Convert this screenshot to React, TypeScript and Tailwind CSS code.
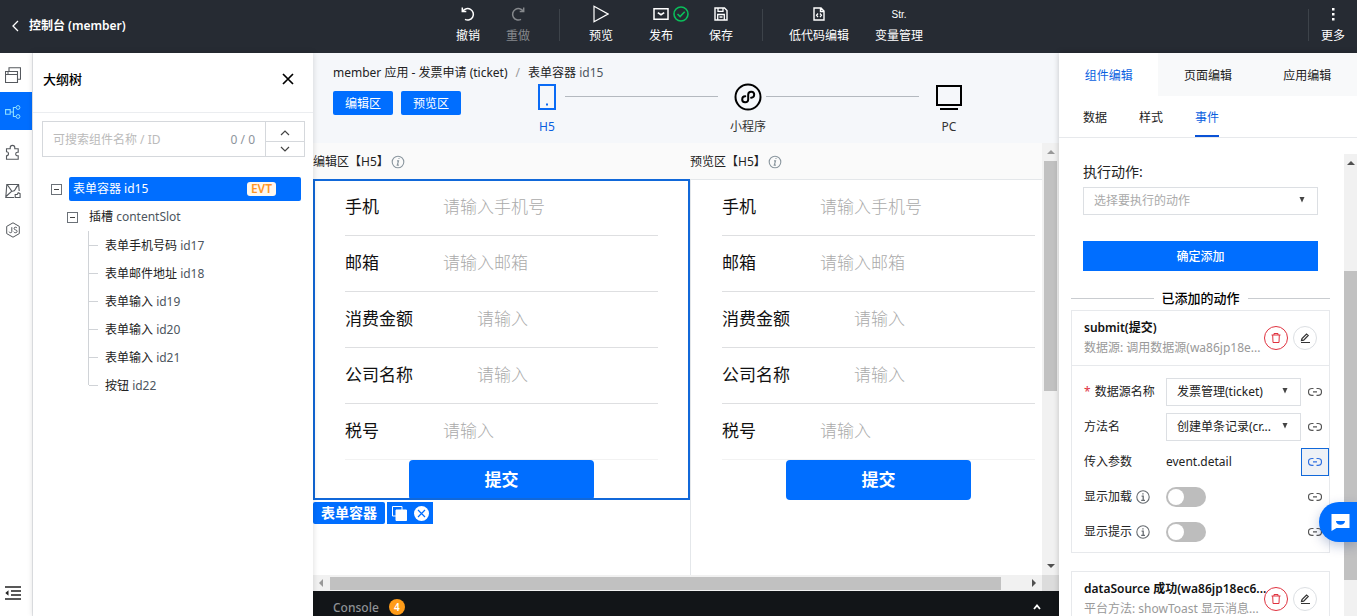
import React, { useState } from "react";

type P = { children?: React.ReactNode; className?: string };

const Svg = ({ children, className = "", box = "0 0 16 16" }: P & { box?: string }) => (
  <svg viewBox={box} className={className} fill="none" stroke="currentColor" strokeWidth="1" aria-hidden="true">
    {children}
  </svg>
);

const UndoIcon = ({ className = "" }: P) => (
  <Svg className={`size-4 ${className}`}>
    <path d="M2.300 1.500v4h4M2.800 5.300A5.700 5.700 0 1 1 5 13.300" strokeWidth="1.500" />
  </Svg>
);

const InfoIcon = ({ italic = false }: { italic?: boolean }) => (
  <Svg className={`size-[14px] shrink-0 ${italic ? "text-[#8b979f]" : "text-[#666b70]"}`} box="0 0 14 14">
    <circle cx="7" cy="7" r={italic ? "5.8" : "6.2"} strokeWidth="1.1" />
    {italic ? (
      <path d="M6 5.900h1.500L6.300 10.200h1.600M7.500 3.500h1" strokeWidth="1.200" />
    ) : (
      <path d="M5.600 6.100h1.600v4M5.200 10.300h3.800M6.300 3.900h1.300" strokeWidth="1.300" />
    )}
  </Svg>
);

const LinkIcon = () => (
  <Svg className="size-[14px]" box="0 0 14 14">
    <path d="M5.500 3.500H3.900a3.400 3.400 0 0 0 0 6.800h1.600M8.500 3.500h1.600a3.400 3.400 0 0 1 0 6.800H8.500M5 6.900h4" strokeWidth="1.200" />
  </Svg>
);

function ToolButton({ icon, label, width, muted = false }: { icon: React.ReactNode; label: string; width: string; muted?: boolean }) {
  return (
    <button type="button" className={`flex flex-col items-center gap-[2px] ${width} ${muted ? "text-[#85888c]" : "text-white"}`}>
      <span className="flex h-5 items-center justify-center">{icon}</span>
      <span className="h-5 text-xs leading-5">{label}</span>
    </button>
  );
}

const Divider = ({ className = "" }: P) => <span className={`h-8 w-px bg-[#3d434a] ${className}`} />;

function Header() {
  return (
    <header className="flex h-[53px] shrink-0 items-start bg-[#262b33] pt-1 text-white">
      <div className="flex flex-1 items-center">
        <a href="#console" className="mt-3 ml-3 flex items-center gap-[10px] text-xs leading-5 font-semibold">
          <Svg className="h-3 w-[7px]" box="0 0 7 12">
            <path d="M6 1 1 6l5 5" strokeWidth="1.3" />
          </Svg>
          控制台 (member)
        </a>
      </div>
      <div className="ml-[25px] flex">
        <ToolButton width="w-[50px]" label="撤销" icon={<UndoIcon />} />
        <ToolButton width="w-[50px]" label="重做" muted icon={<UndoIcon className="-scale-x-100" />} />
        <Divider className="mt-[5px] mr-[11px] ml-4" />
        <ToolButton
          width="w-[60px]"
          label="预览"
          icon={
            <Svg className="h-[18px] w-4" box="0 0 16 18">
              <path d="M1 1.2 15 9 1 16.8Z" strokeWidth="1.2" />
            </Svg>
          }
        />
        <ToolButton
          width="w-[60px]"
          label="发布"
          icon={
            <span className="relative flex">
              <Svg className="h-3 w-4" box="0 0 16 12">
                <path d="M1 .8h14v10.4H1Z" strokeWidth="1.5" />
                <path d="M4.8 4.6 8 6.8l3.2-2.2" strokeWidth="1.7" />
              </Svg>
              <Svg className="absolute -top-[2px] left-5 size-4 text-[#0abf5b]">
                <circle cx="8" cy="8" r="7" strokeWidth="1.6" />
                <path d="m4.5 8 2.6 2.6 4.6-4.8" strokeWidth="1.6" />
              </Svg>
            </span>
          }
        />
        <ToolButton
          width="w-[60px]"
          label="保存"
          icon={
            <Svg className="size-[14px]" box="0 0 14 14">
              <path d="M1 1h9.5L13 3.500V13H1Z" strokeWidth="1.4" />
              <path d="M4 1v3.300h5V1M3.700 13V7.500h6.600V13M5.500 10h3" strokeWidth="1.3" />
            </Svg>
          }
        />
        <Divider className="mt-[5px] mr-4 ml-[11px]" />
        <ToolButton
          width="w-20"
          label="低代码编辑"
          icon={
            <Svg className="h-[14px] w-3" box="0 0 12 14">
              <path d="M1 1h7l3 3v9H1ZM7.500 1v3.500H11" strokeWidth="1.4" />
              <path d="M5 6.500 3.500 8.300 5 10M7 6.500l1.500 1.800L7 10" strokeWidth="1.2" />
            </Svg>
          }
        />
        <ToolButton width="w-20" label="变量管理" icon={<span className="font-['Liberation_Sans'] text-[10px]">Str.</span>} />
      </div>
      <div className="flex flex-1 justify-end">
        <Divider className="mt-[5px]" />
        <ToolButton
          width="w-12"
          label="更多"
          icon={
            <svg viewBox="0 0 4 14" className="h-[14px] w-1" fill="currentColor" aria-hidden="true">
              <rect x="1" y="1" width="2.500" height="2.500" />
              <rect x="1" y="6" width="2.500" height="2.500" />
              <rect x="1" y="11" width="2.500" height="2.500" />
            </svg>
          }
        />
      </div>
    </header>
  );
}

function Rail() {
  const item = "flex h-[39px] w-8 items-center pt-1 pl-[5px]";
  return (
    <nav className="flex w-[33px] shrink-0 flex-col border-r border-[#e7e9ec] bg-white text-[#55595e]">
      <button type="button" aria-label="页面" className={item}>
        <Svg className="size-4">
          <path d="M.5 4.500h12v11H.5ZM.5 7.500h12M4 4.300V.7h11.500v11.500h-3" strokeWidth="1.100" />
          <path d="M2 6h2" />
        </Svg>
      </button>
      <button type="button" aria-label="大纲树" className="flex h-[38px] w-8 items-center bg-[#006eff] pt-[2px] pl-[5px] text-[#8fe0ff]">
        <Svg className="size-4">
          <path d="M.6 5.600h4.600v4.600H.6ZM5.200 8h3.200M11 3.500H8.400v9H11" strokeWidth="1.100" />
          <circle cx="13" cy="3.500" r="1.900" />
          <circle cx="13" cy="12.500" r="1.900" />
        </Svg>
      </button>
      <button type="button" aria-label="组件" className={item}>
        <Svg className="size-4">
          <path d="M1.500 4.800h3.700V3.700a2.300 2.300 0 0 1 4.600 0v1.100h3.400v3.400h-.7a1.800 1.800 0 0 0 0 3.600h.7v3.400H1.500v-3.400a2 2 0 0 0 0-4Z" strokeWidth="1.100" />
        </Svg>
      </button>
      <button type="button" aria-label="素材" className={item}>
        <Svg className="size-4">
          <path d="M9 14.500H.8l1-13h11.800l.6 6.500M1 13.500l5.800-5.300L2.500 2M7 8.200q2.500.3 3.500-2.200t3-4" strokeWidth="1.100" />
          <path d="M10.200 14.500v-3h2l1-1.700 1.900.9v3.800Z" strokeWidth="1.100" />
        </Svg>
      </button>
      <button type="button" aria-label="低代码" className={item}>
        <Svg className="size-4">
          <path d="M8 .8 14.300 4.400v7.200L8 15.200l-6.300-3.600V4.400Z" />
          <path d="M6.800 5.200v4.300q0 1.200-1.200 1.200t-1.500-1M12 6q-.6-.8-1.700-.8t-1.200 1.200 1.500 1.500 1.500 1.500-1.500 1.300-1.900-.9" />
        </Svg>
      </button>
      <button type="button" aria-label="收起" className="mt-auto flex h-[46px] items-center pl-[5px] text-[#222]">
        <Svg className="h-[14px] w-4" box="0 0 16 14">
          <path d="M0 1h16M6 5h10M6 9h10M0 13h16" strokeWidth="1.500" />
          <path d="M.3 7 3.500 4.300v5.400Z" fill="currentColor" stroke="none" />
        </Svg>
      </button>
    </nav>
  );
}

const Collapse = () => (
  <button type="button" aria-label="折叠" className="flex size-[11px] shrink-0 items-center justify-center border border-[#6b7178]">
    <span className="h-px w-[5px] bg-[#444]" />
  </button>
);

const leaves = [
  ["表单手机号码", "id17"],
  ["表单邮件地址", "id18"],
  ["表单输入", "id19"],
  ["表单输入", "id20"],
  ["表单输入", "id21"],
  ["按钮", "id22"],
];

function Outline() {
  return (
    <aside className="z-10 w-[280px] shrink-0 bg-white shadow-[0_0_6px_rgba(0,0,0,0.15)]">
      <div className="flex h-[60px] items-center justify-between border-b border-[#ebedf0] pr-[19px] pb-2 pl-[10px]">
        <h2 className="text-[13px] leading-5 font-medium text-black">大纲树</h2>
        <button type="button" aria-label="关闭" className="text-black">
          <Svg className="size-3" box="0 0 12 12">
            <path d="m1 1 10 10M11 1 1 11" strokeWidth="1.700" />
          </Svg>
        </button>
      </div>
      <div className="mt-2 mr-2 ml-[9px] flex h-9 border border-[#d5d8dc] text-xs">
        <input aria-label="可搜索组件名称 / ID" placeholder="可搜索组件名称 / ID" className="w-0 flex-1 pt-px pl-[10px] outline-none placeholder:text-[#bbb]" />
        <span className="px-[10px] leading-9 text-[#8d949c]">0 / 0</span>
        <div className="flex w-[39px] flex-col border-l border-[#d5d8dc] text-[#444]">
          <button type="button" aria-label="上一个" className="flex flex-1 items-center justify-center border-b border-[#d5d8dc] pt-1">
            <Svg className="h-[6px] w-[10px]" box="0 0 10 6"><path d="m1 5 4-4 4 4" strokeWidth="1.200" /></Svg>
          </button>
          <button type="button" aria-label="下一个" className="flex flex-1 items-center justify-center">
            <Svg className="h-[6px] w-[10px]" box="0 0 10 6"><path d="m1 1 4 4 4-4" strokeWidth="1.200" /></Svg>
          </button>
        </div>
      </div>
      <div className="mt-[18px] pr-3 pl-[18px] text-xs text-[#222]">
        <div className="flex h-7 items-center gap-[7px]">
          <Collapse />
          <div className="flex h-6 flex-1 items-center justify-between rounded-[2px] bg-[#006eff] pr-[25px] pl-1 text-white">
            <span>表单容器 id15</span>
            <span className="h-[14px] rounded-[3px] bg-[#fff8ef] px-1 text-xs leading-[14px] font-semibold text-[#ff9526]">EVT</span>
          </div>
        </div>
        <div className="flex h-7 items-center gap-[11px] pl-4">
          <Collapse />
          <span className="leading-7">插槽 <span className="text-[#4d5660]">contentSlot</span></span>
        </div>
        <ul className="pl-[37px]">
          {leaves.map(([name, id], i) => (
            <li key={id} className="flex h-7">
              <span className={`w-px bg-[#d0d3d7] ${i === leaves.length - 1 ? "h-[14px]" : "h-7"}`} />
              <span className="mt-[14px] mr-[7px] h-px w-[9px] bg-[#d0d3d7]" />
              <span className="leading-[30px]">{name} <span className="text-[#4d5660]">{id}</span></span>
            </li>
          ))}
        </ul>
      </div>
    </aside>
  );
}

function Platform({ icon, label, active = false }: { icon: React.ReactNode; label: string; active?: boolean }) {
  return (
    <button type="button" className={`flex w-9 flex-col items-center ${active ? "text-[#0a5fdf]" : "text-[#333]"}`}>
      <span className="flex h-7 items-center justify-center">{icon}</span>
      <span className="mt-[6px] text-xs leading-5 whitespace-nowrap">{label}</span>
    </button>
  );
}

function TopBar() {
  const blue = "h-6 w-[60px] rounded-[2px] bg-[#006eff] text-xs leading-[26px] text-white";
  return (
    <div className="h-[90px] shrink-0 bg-[#f5f7fa] pt-[10px] pr-[92px] pl-5">
      <p className="flex text-xs leading-5 whitespace-nowrap text-[#222]">
        member 应用 - 发票申请 (ticket) <span className="mx-2 text-[#999]">/</span>表单容器&nbsp;<span className="text-[#4d5660]">id15</span>
      </p>
      <div className="flex">
        <button type="button" className={`${blue} mt-2 mr-2`}>编辑区</button>
        <button type="button" className={`${blue} mt-2 mr-[68px]`}>预览区</button>
        <div className="flex flex-1">
          <Platform
            active
            label="H5"
            icon={
              <Svg className="h-[26px] w-[18px] text-[#0a6bf5]" box="0 0 18 26">
                <path d="M1 1h16v24H1Z" strokeWidth="2" />
                <path d="M8 20.500h2" strokeWidth="2" />
              </Svg>
            }
          />
          <span className="mt-[13px] mr-3 h-px flex-1 bg-[#b4b9bf]" />
          <Platform
            label="小程序"
            icon={
              <Svg className="size-7 text-black" box="0 0 28 28">
                <circle cx="14" cy="14" r="12.500" strokeWidth="2" />
                <path d="M11.300 13.300a3 3 0 1 0 2.900 3.200v-5a3 3 0 1 1 2.900 3.200" strokeWidth="2" strokeLinecap="round" />
              </Svg>
            }
          />
          <span className="mt-[13px] mr-3 h-px flex-1 bg-[#b4b9bf]" />
          <Platform
            label="PC"
            icon={
              <Svg className="h-[26px] w-[26px] text-black" box="0 0 26 26">
                <path d="M1 2h24v19H1Z" strokeWidth="2" />
                <path d="M4 25h18" strokeWidth="2" />
              </Svg>
            }
          />
        </div>
      </div>
    </div>
  );
}

const fields = [
  ["手机", "请输入手机号"],
  ["邮箱", "请输入邮箱"],
  ["消费金额", "请输入"],
  ["公司名称", "请输入"],
  ["税号", "请输入"],
];

function TicketForm({ prefix }: { prefix: string }) {
  return (
    <form className="pt-px" onSubmit={(e) => e.preventDefault()}>
      <div className="px-8">
        {fields.map(([label, hint], i) => (
          <div key={label} className={`flex h-14 items-center gap-16 border-b pb-[2px] text-[17px] leading-6 ${i === 4 ? "border-[#f2f2f2]" : "border-[#dedfe1]"}`}>
            <label htmlFor={`${prefix}-${i}`} className="text-[#111]">{label}</label>
            <input id={`${prefix}-${i}`} placeholder={hint} className="w-0 flex-1 font-light outline-none placeholder:text-[#aaa]" />
          </div>
        ))}
      </div>
      <button type="submit" className="mx-auto block h-10 w-[185px] rounded-[4px] bg-[#006eff] text-[17px] font-bold text-white">提交</button>
    </form>
  );
}

const tri = "fill-current stroke-none";

function Canvas() {
  return (
    <div className="grid min-h-0 flex-1 grid-cols-[minmax(0,1fr)_17px] grid-rows-[minmax(0,1fr)_16px]">
      <div className="flex overflow-hidden bg-white">
        <section className="w-[377px] shrink-0">
          <h3 className="flex h-9 items-center gap-[2px] bg-[#fafafa] pt-px text-xs text-[#222]">
            编辑区【H5】<InfoIcon italic />
          </h3>
          <div className="relative">
            <TicketForm prefix="edit" />
            <div className="pointer-events-none absolute inset-0 border-2 border-[#1168d9]" />
          </div>
          <div className="mt-[2px] flex gap-[2px]">
            <span className="h-[22px] w-[72px] rounded-[2px] bg-[#006eff] text-center text-sm leading-[22px] font-bold whitespace-nowrap text-white">表单容器</span>
            <div className="flex h-[22px] w-[46px] items-center gap-[7px] bg-[#006eff] pl-[5px] text-white">
              <button type="button" aria-label="复制">
                <Svg className="size-[15px]" box="0 0 15 15">
                  <path d="M10 .5H.5V10" />
                  <path d="M.5 10H4M10 .5V4" />
                  <path d="M4 4h10.500v10.500H4Z" fill="currentColor" />
                </Svg>
              </button>
              <button type="button" aria-label="删除">
                <Svg className="size-[15px]" box="0 0 15 15">
                  <circle cx="7.500" cy="7.500" r="7.500" fill="currentColor" stroke="none" />
                  <path d="m4 4 7 7M11 4l-7 7" stroke="#006eff" strokeWidth="1.200" />
                </Svg>
              </button>
            </div>
          </div>
        </section>
        <section className="w-[377px] shrink-0">
          <h3 className="flex h-9 items-center gap-[2px] bg-[#fafafa] pt-px text-xs text-[#222]">
            预览区【H5】<InfoIcon italic />
          </h3>
          <div className="h-full shadow-[inset_1px_1px_0_#e4e7ea]">
            <TicketForm prefix="preview" />
          </div>
        </section>
      </div>
      <div className="flex flex-col items-center bg-[#f1f1f1] text-[#505050]">
        <Svg className="my-[6px] h-[6px] w-2 text-[#999]" box="0 0 8 6"><path className={tri} d="m0 5 4-4 4 4Z" /></Svg>
        <div className="mb-auto h-[230px] w-[13px] bg-[#c1c1c1]" />
        <Svg className="my-[6px] h-[6px] w-2" box="0 0 8 6"><path className={tri} d="m0 1 4 4 4-4Z" /></Svg>
      </div>
      <div className="flex items-center bg-[#f1f1f1] text-[#505050]">
        <Svg className="mr-[6px] ml-[5px] h-2 w-[6px] text-[#999]" box="0 0 6 8"><path className={tri} d="M5 0 1 4l4 4Z" /></Svg>
        <div className="h-[13px] w-[92%] bg-[#c1c1c1]" />
        <Svg className="mr-[5px] ml-auto h-2 w-[6px]" box="0 0 6 8"><path className={tri} d="m1 0 4 4-4 4Z" /></Svg>
      </div>
      <div className="bg-[#dcdcdc]" />
    </div>
  );
}

function Console() {
  return (
    <footer className="flex h-[25px] shrink-0 overflow-hidden bg-[#121518] pr-[18px] pl-5">
      <div className="flex h-8 flex-1 items-center">
        <span className="pt-px text-xs font-medium text-[#8f9296]">Console</span>
        <span className="ml-[10px] size-4 rounded-full bg-[#ff9c19] text-center text-[10px] leading-4 font-semibold text-white">4</span>
        <button type="button" aria-label="展开" className="ml-auto text-white">
          <Svg className="h-[6px] w-2" box="0 0 8 6"><path d="m1 5 3-3.500L7 5" strokeWidth="1.800" /></Svg>
        </button>
      </div>
    </footer>
  );
}

const Caret = () => (
  <Svg className="pointer-events-none absolute top-[10px] right-[13px] size-[6px] text-[#444]" box="0 0 6 6">
    <path className={tri} d="M.5 0h5L3 5.500Z" />
  </Svg>
);

function CardHead({ title, sub }: { title: string; sub: string }) {
  const round = "flex size-6 shrink-0 items-center justify-center rounded-full border bg-white";
  return (
    <div className="flex h-[54px] items-center px-3">
      <div className="w-0 flex-1 text-xs leading-5 whitespace-nowrap">
        <h4 className="font-semibold text-[#111]">{title}</h4>
        <p className="text-[#999]">{sub}</p>
      </div>
      <button type="button" aria-label="删除" className={`${round} mr-[5px] border-[#e0323f] text-[#e0323f]`}>
        <Svg className="h-[10px] w-[10px]" box="0 0 10 10">
          <path d="M.5 2h9M3 2V.5h4V2M1.700 2l.3 7.500h6L8.300 2" strokeWidth="1" />
        </Svg>
      </button>
      <button type="button" aria-label="编辑" className={`${round} border-[#dcdfe3] text-[#333]`}>
        <Svg className="h-[10px] w-[10px]" box="0 0 10 10">
          <path d="M1 9.500h9M1.500 7.500 2 5.500 6.500 1l1.700 1.500L3.700 7.200Z" strokeWidth="1.200" />
        </Svg>
      </button>
    </div>
  );
}

function Row({ label, required = false, info = false, active = false, htmlFor, children }: P & { label: string; required?: boolean; info?: boolean; active?: boolean; htmlFor?: string }) {
  return (
    <div className="flex h-[35px] items-center pl-3 text-xs text-[#222]">
      <div className="flex w-[82px] items-center gap-1 whitespace-nowrap">
        {required && <span className="text-[#e0323f]">*</span>}
        <label htmlFor={htmlFor}>{label}</label>
        {info && <InfoIcon />}
      </div>
      <div className="relative flex-1">{children}</div>
      <button type="button" aria-label={`绑定${label}`} className={`flex size-7 shrink-0 items-center justify-center ${active ? "border border-[#1168d9] bg-[#eef1f6] text-[#2f6fe0]" : "text-[#555]"}`}>
        <LinkIcon />
      </button>
    </div>
  );
}

function Toggle({ id }: { id: string }) {
  return (
    <span className="relative block h-5 w-10">
      <input id={id} type="checkbox" role="switch" className="peer block h-5 w-10 appearance-none rounded-full bg-[#bdbdbd] checked:bg-[#006eff]" />
      <span className="pointer-events-none absolute top-[2px] left-[2px] size-4 rounded-full bg-white peer-checked:left-[22px]" />
    </span>
  );
}

function Inspector() {
  const [tab, setTab] = useState(0);
  const tabs = ["组件编辑", "页面编辑", "应用编辑"];
  const select = "block h-7 w-full appearance-none rounded-none border border-[#dcdfe3] bg-white pl-[10px] text-xs outline-none";
  return (
    <aside className="z-10 flex w-[298px] shrink-0 flex-col bg-white text-[#222] shadow-[0_0_6px_rgba(0,0,0,0.2)]">
      <div className="grid h-[43px] shrink-0 grid-cols-3 text-xs">
        {tabs.map((t, i) => (
          <button key={t} type="button" onClick={() => setTab(i)} className={`pt-[2px] ${i === tab ? "bg-white text-[#0a5fdf]" : "bg-[#f8f9fa]"}`}>
            {t}
          </button>
        ))}
      </div>
      <div className="flex h-[42px] shrink-0 gap-8 border-b border-[#e7e9ec] pl-6 text-xs">
        <button type="button" className="pt-[2px]">数据</button>
        <button type="button" className="pt-[2px]">样式</button>
        <button type="button" className="border-b-2 border-[#0a52d6] pt-1 text-[#0a5fdf]">事件</button>
      </div>
      <div className="flex min-h-0 flex-1">
        <div className="flex-1 overflow-hidden pt-6 pr-[14px] pl-3">
          <div className="px-3">
            <label htmlFor="action" className="block text-sm leading-5">执行动作:</label>
            <div className="relative mt-[5px]">
              <select id="action" className={`${select} text-[#aaa]`}>
                <option>选择要执行的动作</option>
              </select>
              <Caret />
            </div>
            <button type="button" className="mt-[26px] h-[30px] w-full bg-[#006eff] pt-[2px] text-xs font-medium text-white">确定添加</button>
          </div>
          <h3 className="mt-[17px] flex items-center gap-2 text-[13px] leading-5 font-medium text-black before:h-px before:flex-1 before:bg-[#c9ccd0] after:h-px after:flex-1 after:bg-[#c9ccd0]">
            已添加的动作
          </h3>
          <section className="mt-[2px] border border-[#e7e9ec]">
            <div className="border-b border-[#e7e9ec]">
              <CardHead title="submit(提交)" sub="数据源: 调用数据源(wa86jp18e..." />
            </div>
            <div className="pt-2 pb-[3px]">
              <Row label="数据源名称" required htmlFor="ds">
                <select id="ds" className={select}><option>发票管理(ticket)</option></select>
                <Caret />
              </Row>
              <Row label="方法名" htmlFor="method">
                <select id="method" className={select}><option>创建单条记录(cr...</option></select>
                <Caret />
              </Row>
              <Row label="传入参数" active>event.detail</Row>
              <Row label="显示加载" info htmlFor="loading"><Toggle id="loading" /></Row>
              <Row label="显示提示" info htmlFor="toast"><Toggle id="toast" /></Row>
            </div>
          </section>
          <section className="mt-[18px] border border-[#e7e9ec]">
            <CardHead title="dataSource 成功(wa86jp18ec6..." sub="平台方法: showToast 显示消息..." />
          </section>
        </div>
        <div className="mt-4 flex w-[13px] flex-col items-center bg-[#f1f1f1] text-[#505050]">
          <Svg className="my-[6px] h-[6px] w-2" box="0 0 8 6"><path className={tri} d="m0 5 4-4 4 4Z" /></Svg>
          <div className="mt-[99px] h-[309px] w-[13px] bg-[#c1c1c1]" />
        </div>
      </div>
    </aside>
  );
}

export default function App() {
  return (
    <div className="relative flex h-screen flex-col overflow-hidden font-['Noto_Sans','Noto_Sans_CJK_SC',sans-serif]">
      <Header />
      <div className="flex min-h-0 flex-1">
        <Rail />
        <Outline />
        <main className="flex min-w-0 flex-1 flex-col">
          <TopBar />
          <Canvas />
          <Console />
        </main>
        <Inspector />
      </div>
      <button type="button" aria-label="客服" className="absolute right-0 bottom-[74px] z-20 flex h-10 w-[38px] items-center rounded-l-full bg-[#006eff] pl-3 text-white shadow-[0_4px_12px_rgba(0,40,120,0.25)]">
        <Svg className="h-[17px] w-[19px]" box="0 0 19 17">
          <path d="M.5 0h18v14H5.500L.5 17Z" fill="currentColor" stroke="none" />
          <path d="M5 7h9a4.500 3.800 0 0 1-9 0Z" fill="#006eff" stroke="none" />
        </Svg>
      </button>
    </div>
  );
}
